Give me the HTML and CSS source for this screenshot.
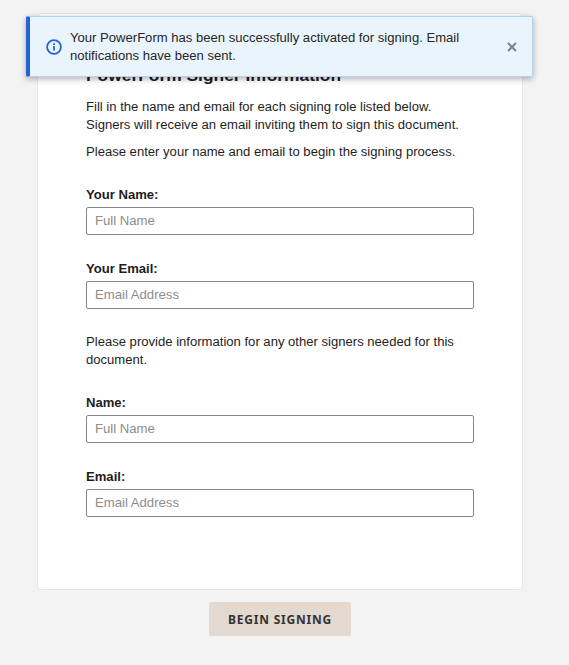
FILE: index.html
```html
<!DOCTYPE html>
<html>
<head>
    <meta charset="UTF-8">
    <meta name="viewport" content="width=device-width, initial-scale=1.0">
    <title>PowerForm Signer Information</title>
    <link rel="stylesheet" href="styles.css">
</head>
<body>
    <div class="toast">
        <svg class="toast-icon" width="16" height="16" viewBox="0 0 16 16">
            <circle cx="8" cy="8" r="6.9" fill="none" stroke="#2463d6" stroke-width="1.8"/>
            <rect x="7.1" y="7" width="1.8" height="4.6" fill="#2463d6"/>
            <rect x="7.1" y="4.2" width="1.8" height="1.8" fill="#2463d6"/>
        </svg>
        <p class="toast-text">Your PowerForm has been successfully activated for signing. Email notifications have been sent.</p>
        <svg class="toast-close" width="10" height="10" viewBox="0 0 10 10">
            <path d="M1 1L9 9M9 1L1 9" stroke="#7d8387" stroke-width="2" fill="none"/>
        </svg>
    </div>

    <div class="page">
        <main class="card">
            <h1>PowerForm Signer Information</h1>
            <p class="intro">Fill in the name and email for each signing role listed below. Signers will receive an email inviting them to sign this document.</p>
            <p class="intro">Please enter your name and email to begin the signing process.</p>

            <div class="form-group">
                <label for="yourName">Your Name:</label>
                <input type="text" id="yourName" placeholder="Full Name">
            </div>
            <div class="form-group">
                <label for="yourEmail">Your Email:</label>
                <input type="text" id="yourEmail" placeholder="Email Address">
            </div>

            <p class="others">Please provide information for any other signers needed for this document.</p>

            <div class="form-group">
                <label for="otherName">Name:</label>
                <input type="text" id="otherName" placeholder="Full Name">
            </div>
            <div class="form-group">
                <label for="otherEmail">Email:</label>
                <input type="text" id="otherEmail" placeholder="Email Address">
            </div>
        </main>

        <div class="actions">
            <button type="button" class="btn">BEGIN SIGNING</button>
        </div>
    </div>
</body>
</html>
```

FILE: styles.css
```css
html, body {
    height: 100%;
}
body {
    font-family: "Liberation Sans", Arial, sans-serif;
    font-size: 13.08px;
    color: #1e1e1e;
    margin: 0;
    padding: 13px 0 0;
    background-color: #f3f3f3;
    box-sizing: border-box;
    overflow: hidden;
}
.toast {
    position: absolute;
    top: 16px;
    left: 26px;
    width: 507px;
    height: 61px;
    box-sizing: border-box;
    display: flex;
    align-items: center;
    padding: 0 15px 0 16px;
    background-color: #e9f4fc;
    border: 1px solid #b4d2f3;
    border-left: 4px solid #2463d6;
    border-radius: 2px;
    box-shadow: 0 2px 6px rgba(0, 0, 0, 0.3);
}
.toast-icon {
    flex: none;
    margin-right: 8px;
}
.toast-text {
    flex: 1;
    margin: 0;
    padding-top: 1px;
    line-height: 18px;
    color: #262626;
}
.toast-close {
    flex: none;
    margin-left: 36px;
}
.page {
    width: 486px;
    margin-left: 37px;
}
.card {
    height: 577px;
    box-sizing: border-box;
    padding: 49px 48px 0;
    background-color: white;
    border: 1px solid #e6e6e6;
    border-radius: 4px;
}
h1 {
    font-size: 17.4px;
    line-height: 24px;
    margin: 0 0 11px;
    color: #1e1e1e;
}
.intro {
    margin: 0 0 9px;
    line-height: 18px;
}
.others {
    margin: 24px 0 0;
    line-height: 18px;
}
.form-group {
    margin-top: 25px;
}
label {
    display: block;
    font-weight: bold;
    line-height: 18px;
    margin-bottom: 3px;
}
input {
    display: block;
    width: 100%;
    height: 28px;
    box-sizing: border-box;
    padding: 0 8px 2px;
    font-family: inherit;
    font-size: 13.15px;
    border: 1px solid #868686;
    border-radius: 2px;
    background-color: white;
}
input::placeholder {
    color: #8c8c8c;
    opacity: 1;
}
.actions {
    display: flex;
    justify-content: center;
    margin-top: 12px;
}
.btn {
    width: 142px;
    height: 34px;
    padding: 0;
    border: none;
    border-radius: 2px;
    background-color: #e3d9d0;
    color: #333;
    font-family: "Noto Sans", sans-serif;
    font-size: 12px;
    font-weight: bold;
    letter-spacing: 0.8px;
    cursor: pointer;
}
```
